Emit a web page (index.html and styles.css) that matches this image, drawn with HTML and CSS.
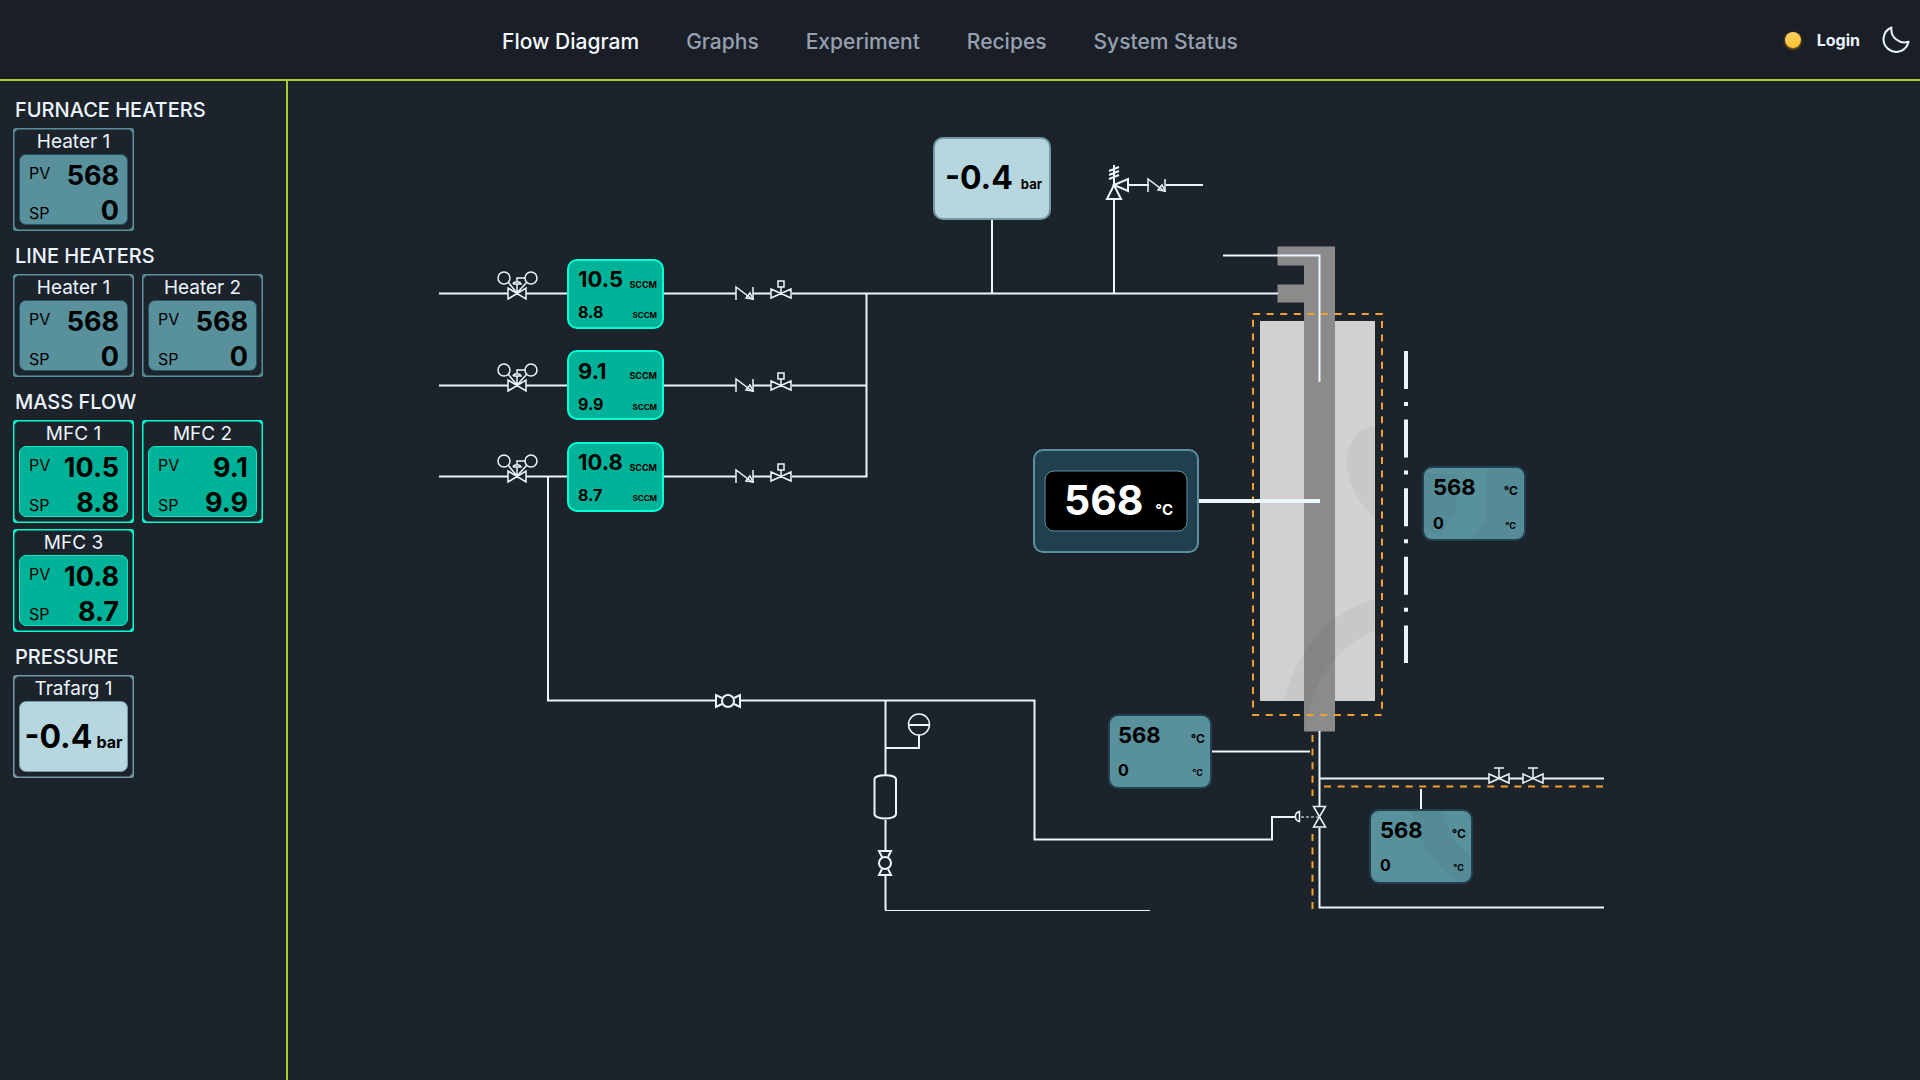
FILE: index.html
```html
<!DOCTYPE html>
<html lang="en">
<head>
<meta charset="utf-8">
<title>Flow Diagram</title>
<link rel="stylesheet" href="styles.css">
</head>
<body>
<header class="topbar">
  <nav class="nav">
    <a class="nav-link active" href="#">Flow Diagram</a>
    <a class="nav-link" href="#">Graphs</a>
    <a class="nav-link" href="#">Experiment</a>
    <a class="nav-link" href="#">Recipes</a>
    <a class="nav-link" href="#">System Status</a>
  </nav>
  <div class="account">
    <span class="status-dot"></span>
    <button class="login" type="button">Login</button>
    <button class="theme" type="button" aria-label="Toggle theme">
      <svg viewBox="0 0 28 28" width="28" height="28"><path d="M9.500 1.500A12.600 12.600 0 1 0 26.500 15.700A13 13 0 0 1 9.500 1.500Z"/></svg>
    </button>
  </div>
</header>
<div class="layout">
  <aside class="sidebar">
    <section class="group">
      <h2>FURNACE HEATERS</h2>
      <div class="cards">
        <article class="card heater"><div class="frame"><h3>Heater 1</h3><dl class="readout"><dt>PV</dt><dd>568</dd><dt>SP</dt><dd>0</dd></dl></div></article>
      </div>
    </section>
    <section class="group">
      <h2>LINE HEATERS</h2>
      <div class="cards">
        <article class="card heater"><div class="frame"><h3>Heater 1</h3><dl class="readout"><dt>PV</dt><dd>568</dd><dt>SP</dt><dd>0</dd></dl></div></article>
        <article class="card heater"><div class="frame"><h3>Heater 2</h3><dl class="readout"><dt>PV</dt><dd>568</dd><dt>SP</dt><dd>0</dd></dl></div></article>
      </div>
    </section>
    <section class="group">
      <h2>MASS FLOW</h2>
      <div class="cards">
        <article class="card mfc"><div class="frame"><h3>MFC 1</h3><dl class="readout"><dt>PV</dt><dd>10.5</dd><dt>SP</dt><dd>8.8</dd></dl></div></article>
        <article class="card mfc"><div class="frame"><h3>MFC 2</h3><dl class="readout"><dt>PV</dt><dd>9.1</dd><dt>SP</dt><dd>9.9</dd></dl></div></article>
        <article class="card mfc"><div class="frame"><h3>MFC 3</h3><dl class="readout"><dt>PV</dt><dd>10.8</dd><dt>SP</dt><dd>8.7</dd></dl></div></article>
      </div>
    </section>
    <section class="group">
      <h2>PRESSURE</h2>
      <div class="cards">
        <article class="card pressure"><div class="frame"><h3>Trafarg 1</h3><p class="single">-0.4 <small>bar</small></p></div></article>
      </div>
    </section>
  </aside>
  <main class="canvas">
    <svg class="diagram" viewBox="288 81 1632 998" role="img" aria-label="Process flow diagram">
      <defs>
        <g id="regulator" class="thin">
          <path d="M-9-5V6L9-5V6ZM0 0L-9-11M0 0L10-11M0 0V-9M-4-9H4C3-12-3-12-4-9M0-11V-15H8"/>
          <circle cx="-13" cy="-15" r="6"/><circle cx="14" cy="-15" r="6"/>
        </g>
        <g id="check" class="thin">
          <path d="M-9 7V-6L7 6M8-6V7"/><path class="fill" d="M8 6L1 5L5 0Z"/>
        </g>
        <g id="solenoid" class="thin">
          <path d="M-10-4V5L10-4V5ZM0 0V-6M-3-12H3V-6H-3Z"/>
        </g>
        <g id="ball">
          <circle r="6"/><path d="M-6-3L-12-6V6L-6 3M6-3L12-6V6L6 3"/>
        </g>
        <g id="manual" class="thin">
          <path d="M-10-4V5L10-4V5ZM0 0V-10M-5-10H5"/>
        </g>
        <clipPath id="furnace"><rect x="1260" y="321" width="116" height="380"/></clipPath>
        <clipPath id="tube"><rect x="1304" y="246" width="31" height="486"/></clipPath>
      </defs>

      <rect class="chamber" x="1260" y="321" width="115" height="380"/>
      <g clip-path="url(#furnace)" class="shade">
        <path d="M1376 427C1359 425 1347 442 1347 464C1347 486 1362 506 1376 520Z"/>
        <path d="M1284 701C1296 650 1330 610 1376 599V630C1340 645 1312 675 1306 732Z"/>
      </g>
      <path class="tube" d="M1277.500 246.500H1335V731.500H1304V302.500H1277.500V284.500H1304V265.500H1277.500Z"/>
      <path class="shade" clip-path="url(#tube)" d="M1284 701C1296 650 1330 610 1376 599V630C1340 645 1312 675 1306 732H1270Z"/>
      <rect class="trace" x="1253" y="314" width="129" height="401"/>
      <path class="trace" d="M1312.500 735V796M1312.500 834V909M1324 786.500H1603"/>
      <path class="axis" d="M1406 351V663"/>

      <g class="pipe">
        <path d="M439 293.500H508M526 293.500H568M663 293.500H736M753 293.500H771M792 293.500H1278"/>
        <path d="M439 385.500H508M526 385.500H568M663 385.500H736M753 385.500H771M792 385.500H866"/>
        <path d="M439 476.500H508M526 476.500H568M663 476.500H736M753 476.500H771M792 476.500H866.500V293"/>
        <path d="M992 219V293M1114 199V293M1128 185H1149M1166 185H1203M1223 255.500H1319.500V382"/>
        <path d="M548 476V700.500H715M740 700.500H1034.500V839.500H1272V817H1295"/>
        <path d="M885.500 700V775M885.500 748H919V735M885.500 820V850M885.500 876V910"/>
        <path class="hair" d="M885 910.500H1150"/>
        <path d="M1212 751.500H1310M1319.500 731V806M1319.500 828V907.500H1604M1319 778.500H1489M1509 778.500H1523M1543 778.500H1604M1421 789V809"/>
        <path class="bold" d="M1198 501H1320"/>
      </g>

      <g class="symbol">
        <use href="#regulator" x="517" y="293"/><use href="#regulator" x="517" y="385"/><use href="#regulator" x="517" y="476"/>
        <use href="#check" x="745" y="293"/><use href="#check" x="745" y="385"/><use href="#check" x="745" y="476"/><use href="#check" x="1157" y="185"/>
        <use href="#solenoid" x="781" y="293"/><use href="#solenoid" x="781" y="385"/><use href="#solenoid" x="781" y="476"/>
        <use href="#manual" x="1499" y="778"/><use href="#manual" x="1533" y="778"/>
        <use href="#ball" x="728" y="701"/>
        <use href="#ball" transform="translate(885 863) rotate(90)"/>
        <path d="M1114 185L1107 199H1121ZL1128 179V191ZM1114 185V165M1109 171L1119 167M1109 175L1119 171M1109 179L1119 175"/>
        <circle class="thin" cx="919" cy="724.500" r="10.500"/><path d="M909 725H929"/>
        <path d="M874.500 779C874.500 774 896 774 896 779V814C896 820 874.500 820 874.500 814Z"/>
        <path class="thin" d="M1313.500 806.500H1325.500L1313.500 827H1325.500Z"/>
        <path class="thin" d="M1299.500 811.500V821.500C1294 820 1294 813 1299.500 811.500Z"/><path class="dots" d="M1301 817H1318"/>
      </g>

      <g class="gauge mfc-gauge">
        <rect x="568" y="260" width="95" height="68" rx="9"/>
        <text class="pv" x="578" y="287">10.5</text><text class="unit" x="657" y="288">SCCM</text>
        <text class="sp" x="578" y="318">8.8</text><text class="unit small" x="657" y="318">SCCM</text>
        <rect x="568" y="351" width="95" height="68" rx="9"/>
        <text class="pv" x="578" y="379">9.1</text><text class="unit" x="657" y="379">SCCM</text>
        <text class="sp" x="578" y="410">9.9</text><text class="unit small" x="657" y="410">SCCM</text>
        <rect x="568" y="443" width="95" height="68" rx="9"/>
        <text class="pv" x="578" y="470">10.8</text><text class="unit" x="657" y="471">SCCM</text>
        <text class="sp" x="578" y="501">8.7</text><text class="unit small" x="657" y="501">SCCM</text>
      </g>

      <g class="gauge pressure-gauge">
        <rect x="934" y="138" width="116" height="81" rx="9"/>
        <text class="big" x="945" y="189">-0.4</text><text class="bar" x="1042" y="189">bar</text>
      </g>

      <g class="gauge panel">
        <rect class="case" x="1034" y="450" width="164" height="102" rx="9"/>
        <rect class="screen" x="1045" y="471" width="142" height="60" rx="9"/>
        <text class="main" x="1064" y="515">568</text><text class="degree" x="1173" y="515">°C</text>
      </g>

      <g class="gauge heater-gauge">
        <rect x="1423" y="467" width="102" height="73" rx="9"/>
        <path class="glint" d="M1424 473L1458 474L1456 512L1440 537L1424 528ZM1487 468H1514C1523 470 1523 475 1523 480V539H1473L1485 520Z"/>
        <text class="pv" x="1433" y="495">568</text><text class="unit deg" x="1518" y="495">°C</text>
        <text class="sp" x="1433" y="529">0</text><text class="unit deg small" x="1516" y="529">°C</text>
        <rect x="1109" y="715" width="102" height="73" rx="9"/>
        <text class="pv" x="1118" y="743">568</text><text class="unit deg" x="1205" y="743">°C</text>
        <text class="sp" x="1118" y="776">0</text><text class="unit deg small" x="1203" y="776">°C</text>
        <rect x="1370" y="810" width="102" height="73" rx="9"/>
        <path class="glint" d="M1411 811H1442C1445 828 1458 848 1470 856V872C1470 880 1467 882 1460 882C1434 868 1418 840 1411 811Z"/>
        <text class="pv" x="1380" y="838">568</text><text class="unit deg" x="1466" y="838">°C</text>
        <text class="sp" x="1380" y="871">0</text><text class="unit deg small" x="1464" y="871">°C</text>
      </g>
    </svg>
  </main>
</div>
</body>
</html>
```
FILE: styles.css
```css
* { box-sizing: border-box; }

body {
  margin: 0;
  min-height: 100vh;
  display: flex;
  flex-direction: column;
  background: #1d232a;
  color: #ebf5ff;
  font-family: Inter, "Liberation Sans", sans-serif;
}

h2, h3, p, dl, dd { margin: 0; }

button {
  padding: 0;
  border: 0;
  background: none;
  color: inherit;
  font: inherit;
}

.topbar {
  display: grid;
  grid-template-columns: 1fr auto 1fr;
  align-items: center;
  height: 81px;
  padding: 0 10px;
  border-bottom: 2px solid #a3ce2e;
  background: #1a1e26;
}

.nav {
  grid-column: 2;
  display: flex;
  gap: 47px;
  margin-right: 180px;
  padding-top: 4px;
}

.nav-link {
  color: #96a0b0;
  font-size: 21px;
  font-weight: 500;
  line-height: 28px;
  text-decoration: none;
}

.nav-link.active { color: #f4faff; }

.account {
  display: flex;
  justify-content: flex-end;
  align-items: center;
}

.status-dot {
  width: 16px;
  height: 16px;
  border-radius: 50%;
  background: linear-gradient(160deg, #ffd572, #febd23);
  box-shadow: 0 1px 3px #a3781a;
}

.login {
  margin: 0 22px 0 16px;
  font-size: 16px;
  font-weight: 700;
  line-height: 24px;
}

.theme { display: flex; }

.theme svg {
  fill: none;
  stroke: #ebf5ff;
  stroke-width: 2px;
  stroke-linejoin: round;
}

.layout {
  flex: 1;
  display: flex;
}

.sidebar {
  flex: none;
  width: 288px;
  padding: 16px 13px;
  border-right: 2px solid #a3ce2e;
}

.group { margin-bottom: 12px; }

.group h2 {
  padding: 0 2px;
  margin-bottom: 5px;
  font-size: 20px;
  font-weight: 500;
  line-height: 26px;
}

.cards {
  display: flex;
  flex-wrap: wrap;
  gap: 6px 8px;
}

.card {
  --edge: #58909b;
  --fill: #58909b;
  --inner: #265565;
  width: 121px;
  height: 103px;
  padding: 1px;
  border-radius: 3px;
  background: var(--edge);
}

.card.mfc {
  --edge: #00ffd5;
  --fill: #00b398;
  --inner: #00ecc6;
}

.card.pressure {
  --edge: #7399a4;
  --fill: #b6d7e0;
  --inner: #7399a4;
}

.frame {
  display: flex;
  flex-direction: column;
  height: 100%;
  padding: 0 4px 4px;
  border: 1px solid color-mix(in srgb, var(--edge) 50%, #1d232a);
  border-radius: 5px;
  background: #1d232a;
}

.frame h3 {
  font-size: 19px;
  font-weight: 400;
  line-height: 24px;
  text-align: center;
}

.readout, .single {
  flex: 1;
  min-height: 0;
  border: 1px solid var(--inner);
  border-radius: 7px;
  background: var(--fill);
  color: #000;
}

.readout {
  display: grid;
  grid-template-columns: auto 1fr;
  grid-template-rows: 35px 35px;
  padding: 3px 8px 0 9px;
}

.readout dt {
  font-size: 16px;
  line-height: 30px;
}

.readout dt:last-of-type { align-self: end; }

.readout dd {
  font-size: 27px;
  font-weight: 700;
  line-height: 35px;
  text-align: right;
}

.single {
  display: flex;
  justify-content: center;
  align-items: baseline;
  gap: 4px;
  font-size: 32px;
  font-weight: 700;
  line-height: 69px;
}

.single small { font-size: 16px; }

.canvas {
  flex: 1;
  min-width: 0;
}

.diagram {
  display: block;
  width: 100%;
  height: auto;
}

.pipe, .symbol {
  fill: none;
  stroke: #ebf5ff;
  stroke-width: 2px;
}

.thin { stroke-width: 1.5; }
.symbol .fill { fill: #ebf5ff; }
.pipe .hair { stroke-width: 1px; }
.pipe .bold { stroke-width: 4px; }
.dots { stroke-width: 1px; stroke-dasharray: 3 2; }

.chamber { fill: #d1d1d1; }
.shade { fill: #000; fill-opacity: .04; }
.tube { fill: #8b8b8b; }

.trace {
  fill: none;
  stroke: #f4a02d;
  stroke-width: 2px;
  stroke-dasharray: 7 6.6;
}

.axis {
  stroke: #ebf5ff;
  stroke-width: 4px;
  stroke-dasharray: 38 13 4 13.600;
}

.gauge rect { stroke-width: 2px; }
.gauge text { font-weight: 700; }
.mfc-gauge rect { fill: #00b398; stroke: #00ffd5; }
.pressure-gauge rect { fill: #b6d7e0; stroke: #7399a4; }
.heater-gauge rect { fill: #58909b; stroke: #204050; }
.gauge .case { fill: #204050; stroke: #58909b; }
.gauge .screen { fill: #000; stroke: #58909b; stroke-width: 1px; }
.glint { fill: #000; fill-opacity: .03; }

.pv { font-size: 22px; }
.sp { font-size: 16px; }
.unit { font-size: 9px; text-anchor: end; }
.unit.small { font-size: 8px; }
.unit.deg { font-size: 12px; }
.unit.deg.small { font-size: 9px; }
.big { font-size: 32px; }
.bar { font-size: 13px; text-anchor: end; }
.panel text { fill: #fff; }
.main { font-size: 41px; }
.degree { font-size: 15px; text-anchor: end; }
```
